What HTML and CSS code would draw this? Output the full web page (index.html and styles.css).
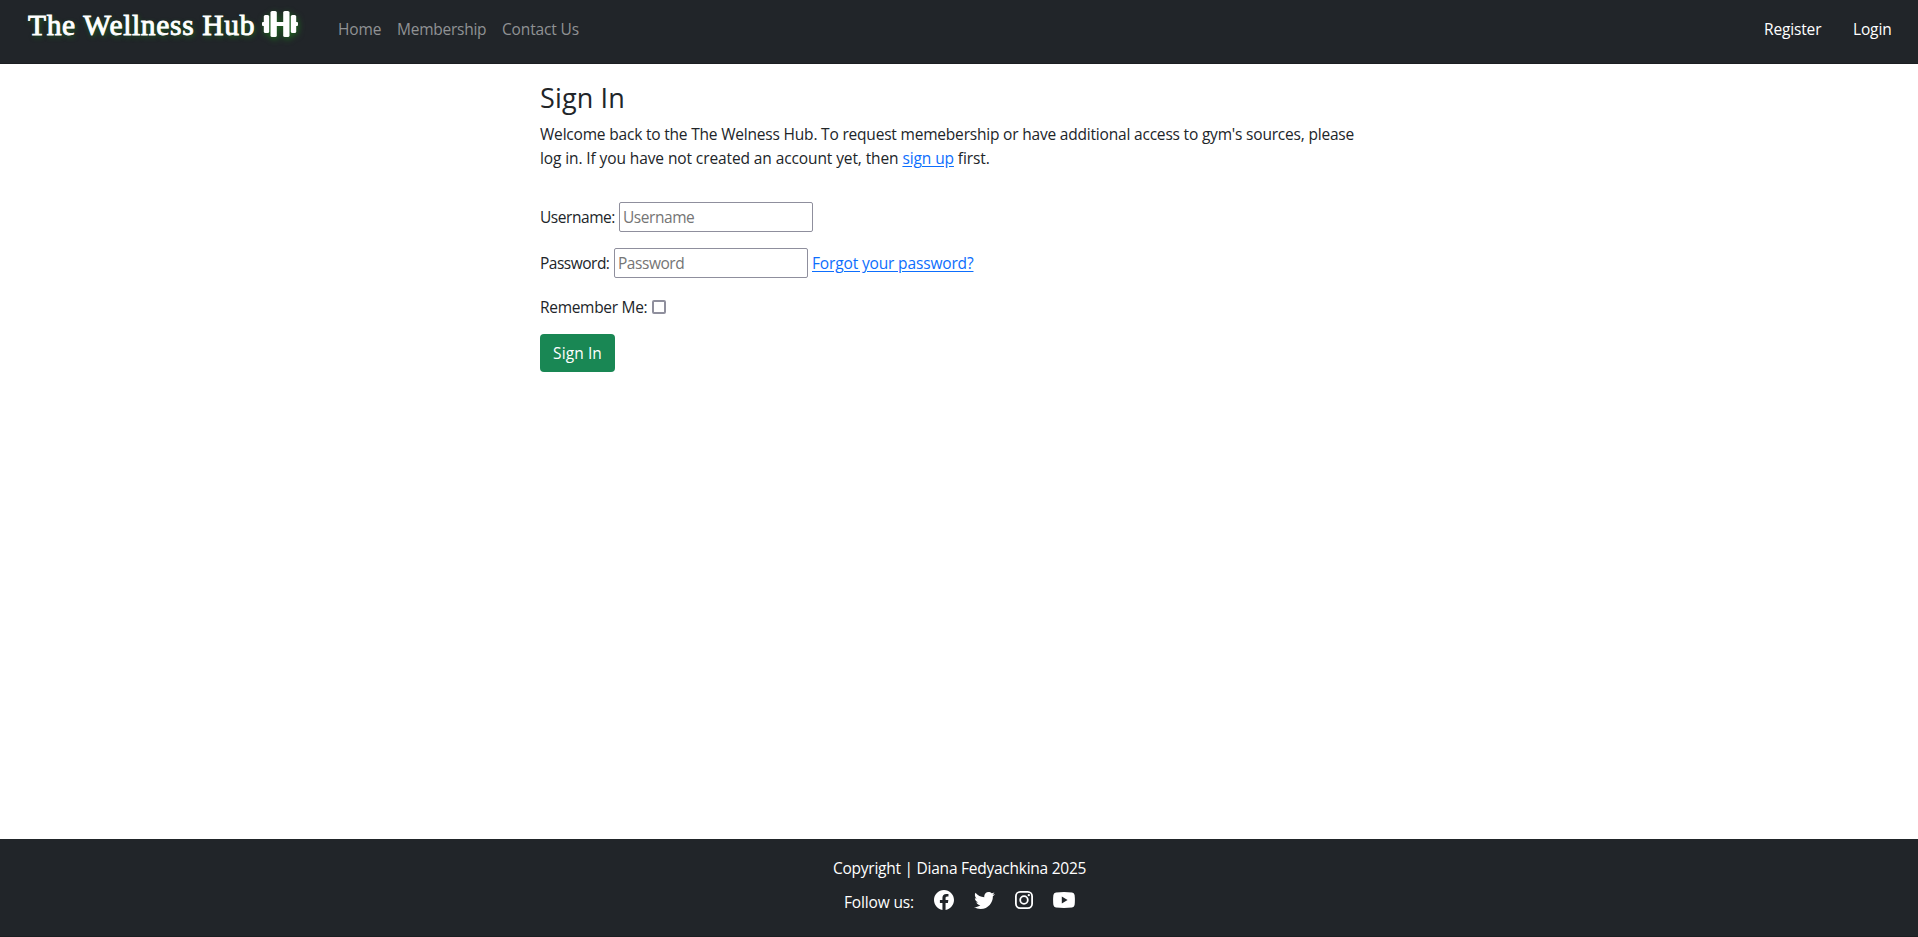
FILE: index.html
```html
<!DOCTYPE html>
<html lang="en">
<head>
<meta charset="utf-8">
<title>Sign In</title>
<link rel="stylesheet" href="styles.css">
</head>
<body>
<header class="navbar">
  <a class="brand"><span class="brand-name">The Wellness Hub</span><svg class="dumbbell" viewBox="0 0 36 26"><rect x="8.5" y="0" width="6.3" height="26" rx="1.6"/><rect x="21.2" y="0" width="6.3" height="26" rx="1.6"/><rect x="13" y="11" width="10" height="4"/><rect x="1.8" y="4" width="5.4" height="18" rx="1.5"/><rect x="28.8" y="4" width="5.4" height="18" rx="1.5"/><rect x="0" y="11" width="4" height="4" rx="1"/><rect x="32" y="11" width="4" height="4" rx="1"/></svg></a>
  <nav class="links"><a class="home">Home</a><a class="membership">Membership</a><a class="contact">Contact Us</a></nav>
  <nav class="account"><a class="register">Register</a><a class="login">Login</a></nav>
</header>
<main class="content">
  <h3 class="title">Sign In</h3>
  <p class="intro">Welcome back to the The Welness Hub. To request memebership or have additional access to gym's sources, please<br><span class="intro-end">log in. If you have not created an account yet, then <a class="link">sign up</a> first.</span></p>
  <form class="form">
    <div class="row"><label class="username">Username:</label><input class="field" type="text" placeholder="Username"></div>
    <div class="row"><label class="password">Password:</label><input class="field" type="password" placeholder="Password"><a class="link forgot">Forgot your password?</a></div>
    <div class="row remember-row"><label class="remember">Remember Me:</label><span class="check"></span></div>
    <button class="submit" type="button">Sign In</button>
  </form>
</main>
<footer class="footer">
  <p class="copyright">Copyright | Diana Fedyachkina 2025</p>
  <div class="social">
    <span class="follow">Follow us:</span>
    <svg class="facebook" viewBox="8 8 496 496"><path d="M504 256C504 119 393 8 256 8S8 119 8 256c0 123.78 90.69 226.38 209.25 245V327.69h-63V256h63v-54.64c0-62.15 37-96.48 93.67-96.48 27.14 0 55.52 4.84 55.52 4.84v61h-31.28c-30.8 0-40.41 19.12-40.41 38.73V256h68.78l-11 71.69h-57.78V501C413.31 482.38 504 379.78 504 256z"/></svg>
    <svg class="twitter" viewBox="0 0 512 512"><path d="M459.37 151.716c.325 4.548.325 9.097.325 13.645 0 138.72-105.583 298.558-298.558 298.558-59.452 0-114.68-17.219-161.137-47.106 8.447.974 16.568 1.299 25.34 1.299 49.055 0 94.213-16.568 130.274-44.832-46.132-.975-84.792-31.188-98.112-72.772 6.498.974 12.995 1.624 19.818 1.624 9.421 0 18.843-1.3 27.614-3.573-48.081-9.747-84.143-51.98-84.143-102.985v-1.299c13.969 7.797 30.214 12.67 47.431 13.319-28.264-18.843-46.781-51.005-46.781-87.391 0-19.492 5.197-37.36 14.294-52.954 51.655 63.675 129.3 105.258 216.365 109.807-1.624-7.797-2.599-15.918-2.599-24.04 0-57.828 46.782-104.934 104.934-104.934 30.213 0 57.502 12.67 76.67 33.137 23.715-4.548 46.456-13.32 66.599-25.34-7.798 24.366-24.366 44.833-46.132 57.827 21.117-2.273 41.584-8.122 60.426-16.243-14.292 20.791-32.161 39.308-52.628 54.253z"/></svg>
    <svg class="instagram" viewBox="0 0 18 18"><rect class="stroke" x=".9" y=".9" width="16.2" height="16.2" rx="4.3"/><circle class="stroke" cx="9" cy="9" r="3.8"/><circle cx="13.8" cy="4.2" r="1.15"/></svg>
    <svg class="youtube" viewBox="0 0 22 16"><path fill-rule="evenodd" d="M3 .4Q11-.4 19 .4Q21.2.7 21.6 3Q22.2 8 21.6 13Q21.2 15.3 19 15.6Q11 16.4 3 15.6Q.8 15.3.4 13Q-.2 8 .4 3Q.8.7 3 .4ZM8.8 4.6V11.4L14.6 8Z"/></svg>
  </div>
</footer>
</body>
</html>
```

FILE: styles.css
```css
* { box-sizing: border-box; }
body {
  margin: 0;
  height: 937px;
  display: flex;
  flex-direction: column;
  background: #fff;
  color: #212529;
  font: 15.5px/24px "Open Sans", "Noto Sans", sans-serif;
  letter-spacing: -0.15px;
}
a, label, .follow { white-space: nowrap; }
.navbar {
  height: 64px;
  flex: none;
  display: flex;
  align-items: flex-start;
  padding: 0 26px 0 28px;
  background: #212529;
  border-bottom: 1px solid #1b1e21;
}
.brand { display: flex; width: 310px; padding-top: 11px; color: #fff; }
.brand-name {
  width: 234px;
  font: 29.5px/28px "Liberation Serif", serif;
  letter-spacing: 0.65px;
  white-space: nowrap;
  -webkit-text-stroke: 0.9px #fff;
  text-shadow: 1px 2px 5px #1c6b1c;
}
.dumbbell { width: 36px; height: 26px; fill: #fff; overflow: visible; filter: drop-shadow(1px 2px 3px #1c6b1c); }
.links { display: flex; padding-top: 17px; color: #909294; }
.home { width: 59px; }
.membership { width: 105px; letter-spacing: -0.25px; }
.account { display: flex; margin-left: auto; padding-top: 17px; color: #fff; }
.register { width: 89px; }
.login { width: 39px; }
.content { width: 840px; margin-left: 540px; padding-top: 17px; flex: 1; }
.title { margin: 0 0 7px; font-size: 27px; line-height: 34px; font-weight: 400; letter-spacing: 0.15px; }
.intro { margin: 0 0 32px; white-space: nowrap; letter-spacing: -0.195px; }
.intro-end { letter-spacing: -0.105px; }
.link { color: #0d6efd; text-decoration: underline; text-underline-offset: 2px; }
.row { display: flex; align-items: center; height: 30px; margin-bottom: 16px; }
.username { width: 79px; letter-spacing: -0.45px; }
.password { width: 74px; letter-spacing: -0.5px; }
.field {
  width: 194px;
  height: 30px;
  padding: 1px 3px;
  border: 1px solid #8f8f9d;
  border-radius: 2px;
  font: inherit;
  letter-spacing: -0.45px;
}
.field::placeholder { color: #757575; }
.forgot { margin-left: 4px; }
.remember-row { height: 26px; margin-bottom: 14px; }
.remember { width: 112px; letter-spacing: -0.3px; }
.check { width: 14px; height: 14px; border: 2px solid #8f8f9d; border-radius: 2px; }
.submit {
  display: block;
  width: 75px;
  height: 38px;
  padding: 0;
  border: 0;
  border-radius: 4px;
  background: #198754;
  color: #fff;
  font: inherit;
  letter-spacing: 0.1px;
}
.footer {
  height: 98px;
  flex: none;
  padding: 17px 0 0 833px;
  background: #212529;
  border-bottom: 1px solid #1b1e21;
  color: #fff;
}
.copyright { margin: 0; letter-spacing: -0.25px; }
.social { display: flex; align-items: center; height: 24px; margin: 9px 0 0 11px; }
.social svg { fill: #fff; margin-top: -2px; }
.follow { width: 90px; padding-top: 2px; }
.facebook { width: 20px; height: 20px; margin-right: 20px; }
.twitter { width: 21px; height: 21px; margin-right: 20px; }
.instagram { width: 18px; height: 18px; margin-right: 20px; }
.instagram .stroke { fill: none; stroke: #fff; stroke-width: 1.8; }
.youtube { width: 22px; height: 16px; }
```
